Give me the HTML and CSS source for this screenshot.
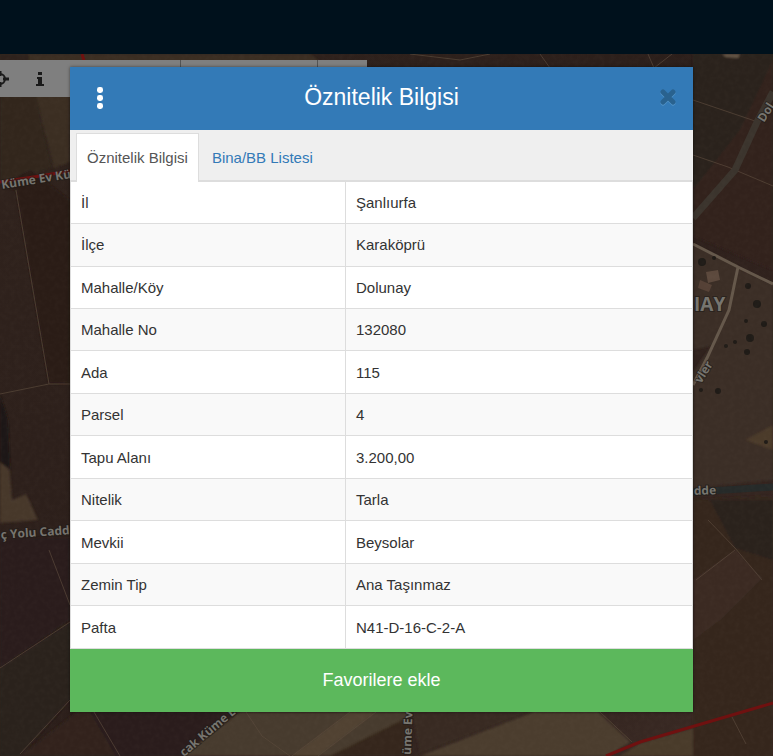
FILE: index.html
```html
<!DOCTYPE html>
<html lang="tr">

<head>
    <meta charset="UTF-8">
    <meta name="viewport" content="width=device-width, initial-scale=1.0">
    <title>Öznitelik Bilgisi</title>
    <link rel="stylesheet" href="styles.css">
</head>

<body>
    <header class="topbar"></header>

    <main class="map">
        <!-- Harita zemini -->
        <svg class="map-canvas" viewBox="0 54 773 702" preserveAspectRatio="xMinYMin slice" aria-label="Harita">
            <defs>
                <linearGradient id="soil" x1="0" y1="0" x2="1" y2="1">
                    <stop offset="0" stop-color="#30231d" />
                    <stop offset="0.5" stop-color="#2b1e1a" />
                    <stop offset="1" stop-color="#3a2a24" />
                </linearGradient>
                <filter id="grain" x="0" y="0" width="100%" height="100%">
                    <feTurbulence type="fractalNoise" baseFrequency="0.2" numOctaves="3" />
                    <feColorMatrix type="matrix" values="0 0 0 0 0.35  0 0 0 0 0.28  0 0 0 0 0.22  0 0 0 1.2 -0.4" />
                </filter>
                <filter id="soft">
                    <feGaussianBlur stdDeviation="1" />
                </filter>
            </defs>
            <rect x="0" y="54" width="773" height="702" fill="url(#soil)" />

            <g filter="url(#soft)">
                <path d="M28 54H310L330 70V98H36Z" fill="#3b2f23" />
                <path d="M0 97H36L52 168L0 184Z" fill="#30261e" />
                <path d="M36 97H70V162L54 168Z" fill="#3a2d22" />
                <path d="M0 54H28L36 97H0Z" fill="#2d201b" />
                <path d="M0 186L16 190L49 384L70 383V200L30 170Z" fill="#291c19" />
                <path d="M0 440L9 463L12 500L26 494L38 520L0 523Z" fill="#46372a" />
                <path d="M0 394L8 420L10 470L0 462Z" fill="#1d1714" />
                <path d="M12 540L18 538L15 553L11 552Z" fill="#4c3d2f" />
                <path d="M0 538H70V620L0 668Z" fill="#291f1a" />
                <path d="M0 668L70 622V700L20 756H0Z" fill="#2c201c" />
                <path d="M20 756L92 700L120 756Z" fill="#30241d" />
                <path d="M90 712H236L182 756H116Z" fill="#2a1a1a" />
                <path d="M182 756L240 712H410L390 756Z" fill="#473a2d" />
                <path d="M292 756L350 712H376L318 756Z" fill="#514333" />
                <path d="M330 756L410 716L404 756Z" fill="#34251f" />
                <path d="M412 712H530L420 754Z" fill="#382a23" />
                <path d="M420 756L534 712H598L630 742L608 756Z" fill="#4b3e2f" />
                <path d="M620 756L640 743L732 717L748 744L742 756Z" fill="#483a2c" />
                <path d="M693 54H773V268L693 236Z" fill="#2c201b" />
                <path d="M693 190L740 130L773 60V270L693 236Z" fill="#33241f" />
                <path d="M693 244L738 266L728 310L712 345L693 350Z" fill="#3a2f27" />
                <path d="M738 268L773 284V480L693 488V372L712 345Z" fill="#3a2d25" />
                <path d="M745 440L773 425V450Z" fill="#4b3a2b" />
                <path d="M693 500L773 496V760H693Z" fill="#35271f" />
                <path d="M693 580L735 550L762 578L720 620L693 640Z" fill="#3b2c22" />
                <path d="M735 548L773 560V500L710 500Z" fill="#2b201e" />
                <path d="M722 54H740L738 58L726 57Z" fill="#655746" />
            </g>

            <g class="map-trail">
                <path d="M16 190L49 384M0 394L49 384H70" />
                <path d="M49 550L70 605M70 622L0 668M70 700L20 754M94 712L120 756" />
                <path d="M410 54L460 60L490 54M648 54L654 68L672 54M540 54L550 68" />
                <path d="M693 100L758 122M693 155L728 167L773 186" />
                <path d="M708 520L735 548L762 580M735 550L696 580" />
                <path d="M246 712L262 736L290 756M292 756L350 712M318 756L376 712M600 712L632 742M732 717L746 744" />
            </g>

            <path class="map-road" d="M693 218L735 170L757 122L773 92" />
            <path class="map-lane" d="M693 244L738 267L773 284M738 267L729 310L707 358L693 385" />
            <path class="map-street" d="M693 492L773 487" />

            <!-- Ağaçlar ve yapılar -->
            <path d="M706 272L718 270L720 280L708 283Z" fill="#5c493d" />
            <path d="M700 280L712 285L709 292L698 288Z" fill="#554136" />
            <g fill="#1f1b17">
                <circle cx="748" cy="286" r="3" />
                <circle cx="757" cy="304" r="4" />
                <circle cx="746" cy="321" r="2" />
                <circle cx="764" cy="324" r="3" />
                <circle cx="750" cy="338" r="4" />
                <circle cx="735" cy="342" r="2" />
                <circle cx="747" cy="352" r="3" />
                <circle cx="726" cy="346" r="2" />
                <circle cx="718" cy="391" r="3" />
                <circle cx="701" cy="390" r="2" />
                <circle cx="766" cy="442" r="2" />
                <circle cx="702" cy="262" r="4" />
                <circle cx="714" cy="258" r="2" />
            </g>

            <rect x="0" y="54" width="773" height="702" filter="url(#grain)" opacity="0.06" />

            <!-- Parsel sınırları -->
            <path class="map-border" d="M0 182L40 176L70 171M82 54L85 64M606 756L640 742L773 703" />

            <g class="map-label">
                <text transform="translate(2 189) rotate(-9)">Küme Ev Kü</text>
                <text transform="translate(1 539) rotate(-4)">ç Yolu Cadd</text>
                <text transform="translate(184 757) rotate(-40)">cak Küme E</text>
                <text transform="translate(411 755) rotate(-88)">üme Ev</text>
                <text transform="translate(764 123) rotate(-58)">Dol</text>
                <text transform="translate(701 384) rotate(-58)">vler</text>
                <text transform="translate(694 495) rotate(-2)">dde</text>
                <text class="map-label-big" x="694" y="311">IAY</text>
            </g>
        </svg>

        <div class="toolbar">
            <button class="tool tool-locate" aria-label="Konum">
                <svg width="18" height="18" viewBox="0 0 18 18">
                    <circle cx="9" cy="9" r="5" fill="none" stroke="currentColor" stroke-width="2" />
                    <path d="M9 1V6M9 12V17M0 9H6M12 9H18" stroke="currentColor" stroke-width="3" />
                </svg>
            </button>
            <button class="tool tool-info" aria-label="Bilgi">
                <svg width="8" height="14" viewBox="0 0 8 14">
                    <path d="M2 0H6V3H2ZM1 5H6V12H8V14H0V12H2V7H1Z" fill="currentColor" />
                </svg>
            </button>
            <span class="tool-cell"></span>
            <span class="tool-cell"></span>
        </div>

        <section class="modal" role="dialog" aria-labelledby="modalTitle">
            <div class="modal-header">
                <button class="menu-btn" aria-label="Menü">
                    <svg width="8" height="22" viewBox="0 0 8 22">
                        <g fill="currentColor">
                            <rect x="1" y="0" width="6" height="6" rx="2.4" />
                            <rect x="1" y="8" width="6" height="6" rx="2.4" />
                            <rect x="1" y="16" width="6" height="6" rx="2.4" />
                        </g>
                    </svg>
                </button>
                <h1 id="modalTitle">Öznitelik Bilgisi</h1>
                <button class="close-btn" aria-label="Kapat">
                    <svg width="16" height="17" viewBox="0 0 16 17">
                        <path d="M3 4L13 14M13 4L3 14" stroke="#5293c8" stroke-width="5" stroke-linecap="round" />
                        <path d="M3 3L13 13M13 3L3 13" stroke="currentColor" stroke-width="5" stroke-linecap="round" />
                    </svg>
                </button>
            </div>

            <nav class="tabs">
                <a href="#oznitelik" class="tab active">Öznitelik Bilgisi</a>
                <a href="#bina" class="tab">Bina/BB Listesi</a>
            </nav>

            <table class="info-table" id="oznitelik">
                <tbody>
                    <tr><th scope="row">İl</th><td>Şanlıurfa</td></tr>
                    <tr><th scope="row">İlçe</th><td>Karaköprü</td></tr>
                    <tr><th scope="row">Mahalle/Köy</th><td>Dolunay</td></tr>
                    <tr><th scope="row">Mahalle No</th><td>132080</td></tr>
                    <tr><th scope="row">Ada</th><td>115</td></tr>
                    <tr><th scope="row">Parsel</th><td>4</td></tr>
                    <tr><th scope="row">Tapu Alanı</th><td>3.200,00</td></tr>
                    <tr><th scope="row">Nitelik</th><td>Tarla</td></tr>
                    <tr><th scope="row">Mevkii</th><td>Beysolar</td></tr>
                    <tr><th scope="row">Zemin Tip</th><td>Ana Taşınmaz</td></tr>
                    <tr><th scope="row">Pafta</th><td>N41-D-16-C-2-A</td></tr>
                </tbody>
            </table>

            <button class="favorite-btn">Favorilere ekle</button>
        </section>
    </main>
</body>

</html>
```
FILE: styles.css
```css
* {
    margin: 0;
    padding: 0;
    box-sizing: border-box;
}

body {
    display: flex;
    flex-direction: column;
    min-height: 100vh;
    font-family: "Liberation Sans", Arial, sans-serif;
    font-size: 15px;
    line-height: 21px;
    color: #333;
    background: #2b1e1a;
}

button {
    border: none;
    background: none;
    font-family: inherit;
    cursor: pointer;
}

svg {
    display: block;
    flex-shrink: 0;
}

/* Üst çubuk */
.topbar {
    height: 54px;
    background: #00111c;
}

/* Harita */
.map {
    position: relative;
    flex: 1;
    padding: 13px 80px 44px 70px;
    overflow: hidden;
}

.map-canvas {
    position: absolute;
    top: 0;
    left: 0;
    width: 100%;
    height: 100%;
}

.map-trail {
    fill: none;
    stroke: #59483b;
    stroke-width: 1;
    opacity: 0.7;
}

.map-road {
    fill: none;
    stroke: #3b342d;
    stroke-width: 7;
}

.map-lane {
    fill: none;
    stroke: #65584b;
    stroke-width: 3;
}

.map-street {
    fill: none;
    stroke: #262a29;
    stroke-width: 7;
}

.map-border {
    fill: none;
    stroke: #6f1110;
    stroke-width: 3;
}

.map-label {
    font-family: "Open Sans", "Noto Sans", sans-serif;
    font-size: 12px;
    font-weight: 700;
    fill: #77756f;
    stroke: #201c19;
    stroke-width: 2px;
    stroke-opacity: 0.6;
    paint-order: stroke;
}

.map-label-big {
    font-size: 19px;
}

/* Araç çubuğu */
.toolbar {
    position: absolute;
    top: 6px;
    left: 0;
    display: flex;
    width: 367px;
    height: 37px;
    background: #7f7f7f;
    overflow: hidden;
}

.tool,
.tool-cell {
    display: flex;
    flex-shrink: 0;
    align-items: center;
}

.tool {
    color: #1a1a1a;
}

.tool-locate {
    width: 20px;
    justify-content: flex-end;
    padding-right: 11px;
}

.tool-info {
    width: 40px;
    justify-content: center;
}

.tool-cell {
    width: 137px;
    border-left: 1px solid #555;
}

.tool-info + .tool-cell {
    margin-left: 120px;
}

/* Pencere */
.modal {
    position: relative;
    background: #fff;
    box-shadow: 0 0 3px rgba(0, 0, 0, 0.5);
}

.modal-header {
    display: flex;
    align-items: center;
    justify-content: space-between;
    height: 63px;
    padding: 0 16px 2px 20px;
    background: #337ab7;
    color: #fff;
}

.modal-header h1 {
    padding: 0 6px 2px 0;
    font-size: 23px;
    line-height: 28px;
    font-weight: normal;
}

.menu-btn {
    padding: 0 6px;
    color: #fff;
}

.close-btn {
    padding: 0 1px;
    color: #29628f;
}

/* Sekmeler */
.tabs {
    display: flex;
    padding: 3px 6px 0;
    background: #efefef;
    border-bottom: 2px solid #ddd;
}

.tab {
    margin-bottom: -2px;
    margin-right: 2px;
    padding: 13px 10px 14px;
    border: 1px solid transparent;
    border-bottom: none;
    color: #337ab7;
    text-decoration: none;
}

.tab.active {
    background: #fff;
    border-color: #ddd;
    color: #555;
}

/* Öznitelik tablosu */
.info-table {
    width: 100%;
    height: 467px;
    border-collapse: collapse;
}

.info-table th,
.info-table td {
    padding: 0 10px;
    border: 1px solid #ddd;
    font-weight: normal;
    text-align: left;
    vertical-align: middle;
}

.info-table th {
    width: 275px;
}

.info-table tr:first-child > * {
    border-top: none;
}

.info-table tr:nth-child(even) {
    background: #f9f9f9;
}

.favorite-btn {
    display: block;
    width: 100%;
    padding: 17px 10px 18px;
    background: #5cb85c;
    color: #fff;
    font-size: 18px;
    line-height: 28px;
}
```
